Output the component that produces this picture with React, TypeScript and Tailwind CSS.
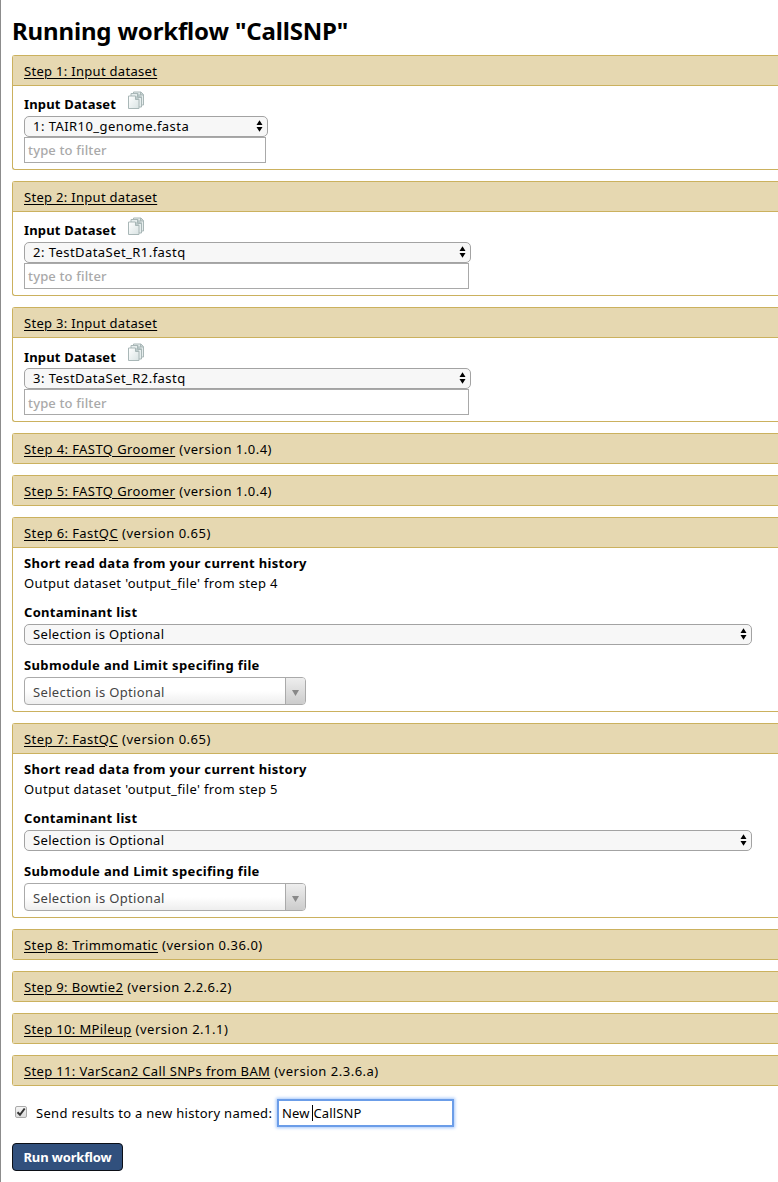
import React from "react";

function Arrows() {
  return (
    <svg width="7" height="12" viewBox="0 0 7 12" className="shrink-0">
      <path d="M3.5 0.3 L6.5 5 H0.5 Z M3.5 11.7 L6.5 7 H0.5 Z" fill="#000" />
    </svg>
  );
}

function Pages() {
  return (
    <svg width="18" height="19" viewBox="0 0 18 19" className="shrink-0">
      <defs>
        <linearGradient id="sheet" x1="0" y1="0" x2="1" y2="1">
          <stop offset="0" stopColor="#ffffff" />
          <stop offset="1" stopColor="#d9e3e3" />
        </linearGradient>
      </defs>
      <g stroke="#a9b7b7" strokeWidth="1" strokeLinejoin="round">
        <path d="M6.5 1 H14 L16.5 3.5 V14 H6.5 Z" fill="#e6eded" />
        <path d="M13.5 1 V4 H16.5" fill="#c3d0d0" />
        <path d="M4 2.5 H11 L14.5 6 V16 H4 Z" fill="#e6eded" />
        <path d="M10.5 2.5 V6.5 H14.5" fill="#b3c3c3" />
        <path d="M1.5 5 H8.5 L12 8.5 V17.5 H1.5 Z" fill="url(#sheet)" />
        <path d="M8.5 5 V8.5 H12" fill="#b9c9c9" />
      </g>
    </svg>
  );
}

function Select({ text, width, tracking }: { text: string; width: string; tracking: string }) {
  return (
    <div className={`${width} flex h-[21px] items-center justify-between rounded-[5px] border border-[#a3a3a3] bg-[#f7f7f7] pr-1 pb-0.5 pl-2`}>
      <span className={tracking}>{text}</span>
      <Arrows />
    </div>
  );
}

interface PanelProps {
  title: string;
  version?: string;
  tracking?: string;
  children?: React.ReactNode;
}

function Panel({ title, version, tracking = "tracking-[0.42px]", children }: PanelProps) {
  return (
    <section className="mb-[11px] rounded-l-[3px] border border-r-0 border-[#cbb15e]">
      <header className={`flex h-[29px] items-center bg-[#e6d8b1] pl-[11px] ${children ? "box-content border-b border-[#cbb15e]" : ""}`}>
        <span className={`${tracking} underline decoration-1 underline-offset-2`}>{title}</span>
        {version && <span className="ml-1 tracking-[0.5px]">(version {version})</span>}
      </header>
      {children}
    </section>
  );
}

interface InputStepProps {
  title: string;
  file: string;
  selectWidth: string;
  inputWidth: string;
  labelPad?: string;
  filterPad?: string;
}

function InputStep({ title, file, selectWidth, inputWidth, labelPad = "pt-[3px]", filterPad = "" }: InputStepProps) {
  return (
    <Panel title={title} tracking="tracking-[0.3px]">
      <div className="h-[83px] pl-[11px]">
        <div className="flex h-[30px] items-start pt-[5px]">
          <span className={`${labelPad} w-[92px] font-bold tracking-[0.17px]`}>Input Dataset</span>
          <span className="ml-[11px]"><Pages /></span>
        </div>
        <Select text={file} width={selectWidth} tracking="tracking-[0.45px]" />
        <div className={`${inputWidth} ${filterPad} flex h-[26px] items-center border border-[#a9a9a9] pl-[3px] font-medium tracking-[0.15px] text-[#a9a9a9]`}>type to filter</div>
      </div>
    </Panel>
  );
}

function QcStep({ title, source }: { title: string; source: string }) {
  return (
    <Panel title={title} version="0.65">
      <div className="h-[163px] pt-[5px] pl-[11px]">
        <div className="h-5 font-bold tracking-[0.32px]">Short read data from your current history</div>
        <div className="h-[29px] tracking-[0.35px]">Output dataset 'output_file' from step {source}</div>
        <div className="h-[22px] font-bold tracking-[0.3px]">Contaminant list</div>
        <Select text="Selection is Optional" width="w-[728px]" tracking="tracking-[0.33px]" />
        <div className="mt-[10px] h-[22px] font-bold tracking-[0.36px]">Submodule and Limit specifing file</div>
        <div className="flex h-7 w-[282px] overflow-hidden rounded-[4px] border border-[#aaa] bg-linear-to-b from-white from-50% to-[#eeeeee]">
          <span className="flex flex-1 items-center pt-[2px] pl-[8px] tracking-[0.35px] text-[#444]">Selection is Optional</span>
          <span className="flex w-5 items-center justify-center border-l border-[#aaa] bg-linear-to-b from-[#eeeeee] to-[#cccccc]">
            <svg width="7" height="6" viewBox="0 0 7 6" className="mt-1"><path d="M0 0H7L3.5 6Z" fill="#888" /></svg>
          </span>
        </div>
      </div>
    </Panel>
  );
}

export default function App() {
  return (
    <main className="h-[1182px] w-[778px] overflow-hidden border-l border-[#8c8c8c] bg-white pl-[11px] font-['Noto_Sans',sans-serif] text-[13px] leading-5 whitespace-nowrap text-black">
      <h1 className="flex h-[55px] items-start pt-[16px] text-[24px] leading-[30px] font-bold tracking-[-0.16px]">Running workflow "CallSNP"</h1>
      <InputStep title="Step 1: Input dataset" file="1: TAIR10_genome.fasta" selectWidth="w-[244px]" inputWidth="w-[242px]" />
      <InputStep title="Step 2: Input dataset" file="2: TestDataSet_R1.fastq" selectWidth="w-[447px]" inputWidth="w-[445px]" />
      <InputStep title="Step 3: Input dataset" file="3: TestDataSet_R2.fastq" selectWidth="w-[447px]" inputWidth="w-[445px]" labelPad="pt-[4px]" filterPad="pt-0.5" />
      <Panel title="Step 4: FASTQ Groomer" version="1.0.4" />
      <Panel title="Step 5: FASTQ Groomer" version="1.0.4" />
      <QcStep title="Step 6: FastQC" source="4" />
      <QcStep title="Step 7: FastQC" source="5" />
      <Panel title="Step 8: Trimmomatic" version="0.36.0" />
      <Panel title="Step 9: Bowtie2" version="2.2.6.2" tracking="tracking-[0.35px]" />
      <Panel title="Step 10: MPileup" version="2.1.1" tracking="tracking-[0.35px]" />
      <Panel title="Step 11: VarScan2 Call SNPs from BAM" version="2.3.6.a" tracking="tracking-[0.35px]" />
      <div className="mt-[12px] flex h-[29px] items-center">
        <span className="mb-0.5 ml-[3px] flex size-3 items-center justify-center rounded-[2px] border border-[#aaa] bg-linear-to-b from-[#f4f4f4] to-[#dddddd]">
          <svg width="10" height="10" viewBox="0 0 10 10"><path d="M1.5 5.2 L4 7.8 L8.7 1.5" fill="none" stroke="#333" strokeWidth="2" /></svg>
        </span>
        <span className="ml-[9px] w-[237px] tracking-[0.3px]">Send results to a new history named:</span>
        <div className="ml-[4px] flex h-[28px] w-[177px] items-center border-2 border-[#6b9de8] pl-[3px] shadow-[0_0_3px_1px_#a5c7fa]">
          <span className="tracking-[0.1px]">New</span>
          <span className="ml-[3px] h-4 w-px bg-black" />
          <span className="tracking-[0.15px]">CallSNP</span>
        </div>
      </div>
      <button className="mt-[16px] flex h-7 w-[111px] items-center justify-center rounded-[4px] border border-[#0c0f16] bg-[#31507d] font-bold tracking-[-0.15px] text-white">Run workflow</button>
    </main>
  );
}
